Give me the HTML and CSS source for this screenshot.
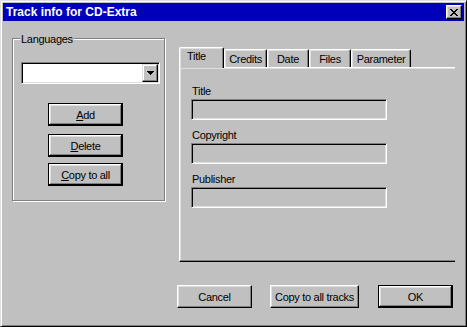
FILE: index.html
```html
<!DOCTYPE html>
<html>
  <head>
    <title>Track info for CD-Extra</title>
    <meta name="viewport" content="width=device-width, initial-scale=1" />
    <link rel="stylesheet" href="styles.css">
  </head>
  <body>
    <div class="window">
      <div class="titlebar">
        <span class="title">Track info for CD-Extra</span>
        <button class="close-btn">
          <svg width="8" height="7" viewBox="0 0 8 7" shape-rendering="crispEdges">
            <rect x="0" y="0" width="2" height="1"/><rect x="6" y="0" width="2" height="1"/>
            <rect x="1" y="1" width="2" height="1"/><rect x="5" y="1" width="2" height="1"/>
            <rect x="2" y="2" width="4" height="1"/>
            <rect x="3" y="3" width="2" height="1"/>
            <rect x="2" y="4" width="4" height="1"/>
            <rect x="1" y="5" width="2" height="1"/><rect x="5" y="5" width="2" height="1"/>
            <rect x="0" y="6" width="2" height="1"/><rect x="6" y="6" width="2" height="1"/>
          </svg>
        </button>
      </div>
      <div class="content">
        <div class="columns">
          <div class="group">
            <span class="group-label">Languages</span>
            <div class="combo">
              <div class="combo-text"></div>
              <div class="combo-btn">
                <svg width="7" height="4" viewBox="0 0 7 4" shape-rendering="crispEdges">
                  <rect x="0" y="0" width="7" height="1"/>
                  <rect x="1" y="1" width="5" height="1"/>
                  <rect x="2" y="2" width="3" height="1"/>
                  <rect x="3" y="3" width="1" height="1"/>
                </svg>
              </div>
            </div>
            <div class="group-buttons">
              <button class="btn default add"><u>A</u>dd</button>
              <button class="btn default delete"><u>D</u>elete</button>
              <button class="btn default copy"><u>C</u>opy to all</button>
            </div>
          </div>
          <div class="tabs">
            <div class="tab-strip">
              <div class="tab selected tab-title">Title</div>
              <div class="tab tab-credits">Credits</div>
              <div class="tab tab-date">Date</div>
              <div class="tab tab-files">Files</div>
              <div class="tab tab-param">Parameter</div>
            </div>
            <div class="tab-page">
              <div class="field">
                <label>Title</label>
                <div class="input"></div>
              </div>
              <div class="field">
                <label>Copyright</label>
                <div class="input"></div>
              </div>
              <div class="field">
                <label>Publisher</label>
                <div class="input"></div>
              </div>
            </div>
          </div>
        </div>
        <div class="buttons">
          <button class="btn cancel">Cancel</button>
          <button class="btn copy-tracks">Copy to all tracks</button>
          <button class="btn default ok">OK</button>
        </div>
      </div>
    </div>
  </body>
</html>
```

FILE: styles.css
```css
html {
  font-family: "Liberation Sans", Arial, sans-serif;
  font-size: 11px;
  line-height: 13px;
  letter-spacing: -0.3px;
}
body {
  margin: 0;
  background-color: #c0c0c0;
}
.window {
  box-sizing: border-box;
  width: 467px;
  height: 327px;
  padding: 2px;
  background-color: #c0c0c0;
  border: 1px solid;
  border-color: #dfdfdf #000 #000 #dfdfdf;
  box-shadow: inset 1px 1px #fff, inset -1px -1px #808080;
}
.titlebar {
  height: 18px;
  background-color: #0000bb;
  display: flex;
  align-items: center;
  justify-content: space-between;
  padding: 0 2px 0 3px;
}
.title {
  color: white;
  font-weight: bold;
  font-size: 12px;
  letter-spacing: 0;
}
.close-btn {
  box-sizing: border-box;
  width: 16px;
  height: 14px;
  padding: 0;
  display: flex;
  align-items: center;
  justify-content: center;
  background-color: #c0c0c0;
  border: 1px solid;
  border-color: #fff #000 #000 #fff;
  box-shadow: inset -1px -1px #808080, inset 1px 1px #dfdfdf;
}
.content {
  padding: 17px 0 0 9px;
}
.columns {
  display: grid;
  grid-template-columns: 153px 276px;
  column-gap: 14px;
  align-items: start;
}
.group {
  position: relative;
  box-sizing: border-box;
  height: 163px;
  border: 1px solid #808080;
  box-shadow: inset 1px 1px #fff, 1px 1px #fff;
  padding: 23px 4px 0 8px;
}
.group-label {
  position: absolute;
  top: -6px;
  left: 7px;
  padding: 0 1px;
  background-color: #c0c0c0;
}
.combo {
  box-sizing: border-box;
  width: 139px;
  height: 22px;
  display: flex;
  justify-content: flex-end;
  background-color: #fff;
  border: 1px solid;
  border-color: #808080 #fff #fff #808080;
  box-shadow: inset 1px 1px #000, inset -1px -1px #dfdfdf;
  padding: 1px;
}
.combo-btn {
  box-sizing: border-box;
  width: 16px;
  height: 18px;
  display: flex;
  align-items: center;
  justify-content: center;
  background-color: #c0c0c0;
  border: 1px solid;
  border-color: #dfdfdf #000 #000 #dfdfdf;
  box-shadow: inset -1px -1px #808080, inset 1px 1px #fff;
}
.group-buttons {
  display: flex;
  flex-direction: column;
  padding-left: 27px;
  padding-top: 19px;
}
.btn {
  box-sizing: border-box;
  width: 75px;
  height: 23px;
  padding: 0;
  font-family: inherit;
  font-size: 11px;
  letter-spacing: inherit;
  color: #000;
  background-color: #c0c0c0;
  border: 1px solid;
  border-color: #fff #000 #000 #fff;
  box-shadow: inset -1px -1px #808080, inset 1px 1px #dfdfdf;
}
.btn.default {
  border-color: #000;
  box-shadow: inset -1px -1px #000, inset 1px 1px #fff, inset -2px -2px #808080, inset 2px 2px #dfdfdf;
}
.delete {
  margin-top: 8px;
}
.copy {
  margin-top: 6px;
}
.tabs {
  margin-top: 9px;
}
.tab-strip {
  display: flex;
  align-items: flex-end;
  height: 20px;
}
.tab {
  box-sizing: border-box;
  height: 18px;
  padding-top: 3px;
  text-align: center;
  background-color: #c0c0c0;
  border-top: 1px solid #fff;
  border-left: 1px solid #fff;
  border-right: 1px solid #000;
  border-radius: 2px 2px 0 0;
  box-shadow: inset -1px 0 #808080, inset 1px 1px #dfdfdf;
}
.tab.selected {
  position: relative;
  z-index: 1;
  height: 21px;
  margin-bottom: -1px;
  padding-top: 2px;
  text-align: left;
  padding-left: 7px;
}
.tab-title {
  width: 45px;
}
.tab-credits {
  width: 43px;
}
.tab-date {
  width: 42px;
}
.tab-files {
  width: 42px;
}
.tab-param {
  width: 60px;
}
.tab-page {
  box-sizing: border-box;
  height: 195px;
  border-top: 1px solid #fff;
  border-left: 1px solid #fff;
  border-bottom: 1px solid #000;
  box-shadow: inset 0 -1px #808080, inset 1px 1px #dfdfdf;
  padding: 17px 0 0 11px;
}
.field {
  margin-bottom: 9px;
}
.field label {
  display: block;
  height: 13px;
  margin-bottom: 1px;
  padding-left: 1px;
}
.input {
  box-sizing: border-box;
  width: 196px;
  height: 21px;
  background-color: #c0c0c0;
  border: 1px solid;
  border-color: #808080 #fff #fff #808080;
  box-shadow: inset 1px 1px #000, inset -1px -1px #dfdfdf;
}
.buttons {
  display: flex;
  justify-content: flex-end;
  gap: 18px;
  margin-top: 23px;
  padding-right: 11px;
}
.copy-tracks {
  width: 89px;
  margin-right: 1px;
}
```
